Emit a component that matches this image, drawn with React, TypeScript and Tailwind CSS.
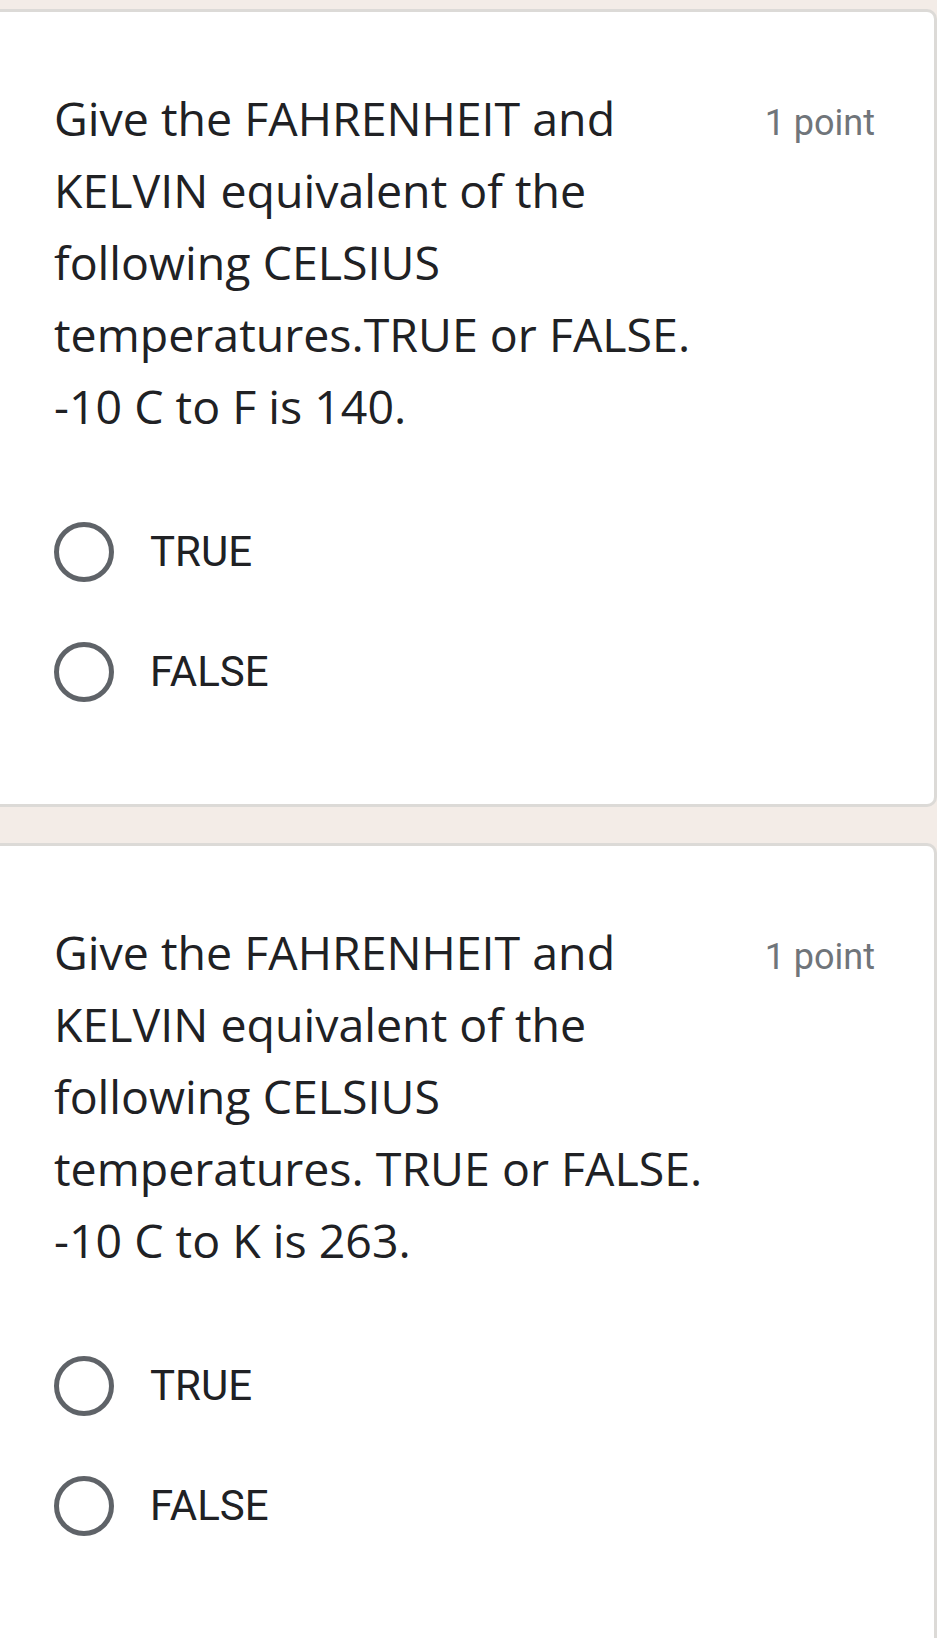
import React from "react";

const Radio = ({ label }: { label: string }) => (
  <div className="flex items-center h-[60px]">
    <div className="w-[60px] h-[60px] rounded-full border-[5px] border-[#5f6368] shrink-0" />
    <span className="ml-[36px] text-[42px] text-[#202124] leading-none" style={{ fontFamily: "Roboto, sans-serif" }}>{label}</span>
  </div>
);

const Card = ({ lines, last }: { lines: string[]; last?: boolean }) => (
  <div className={`bg-white border-t-[3px] border-r-[3px] border-[#dcdad7] rounded-tr-[10px] ${last ? "flex-1" : "border-b-[3px] rounded-br-[10px] pb-[102px]"} pl-[54px] pr-[59px] pt-[70px]`}>
    <div className="flex justify-between items-start">
      <div className="text-[46.5px] leading-[72px] text-[#202124]" style={{ fontFamily: "'Open Sans', sans-serif" }}>
        {lines.map((l) => (
          <div key={l} className="whitespace-nowrap">{l}</div>
        ))}
      </div>
      <div className="text-[36px] leading-[72px] text-[#70757a] whitespace-nowrap pt-[5px]" style={{ fontFamily: "Roboto, sans-serif" }}>1 point</div>
    </div>
    <div className="mt-[80px] flex flex-col gap-[60px]">
      <Radio label="TRUE" />
      <Radio label="FALSE" />
    </div>
  </div>
);

export default function App() {
  return (
    <div className="w-[937px] min-h-[1638px] bg-[#f3ece7] pt-[9px] overflow-hidden flex flex-col">
      <Card
        lines={[
          "Give the FAHRENHEIT and",
          "KELVIN equivalent of the",
          "following CELSIUS",
          "temperatures.TRUE or FALSE.",
          "-10 C to F is 140.",
        ]}
      />
      <div className="h-[36px] shrink-0" />
      <Card
        last
        lines={[
          "Give the FAHRENHEIT and",
          "KELVIN equivalent of the",
          "following CELSIUS",
          "temperatures. TRUE or FALSE.",
          "-10 C to K is 263.",
        ]}
      />
    </div>
  );
}
